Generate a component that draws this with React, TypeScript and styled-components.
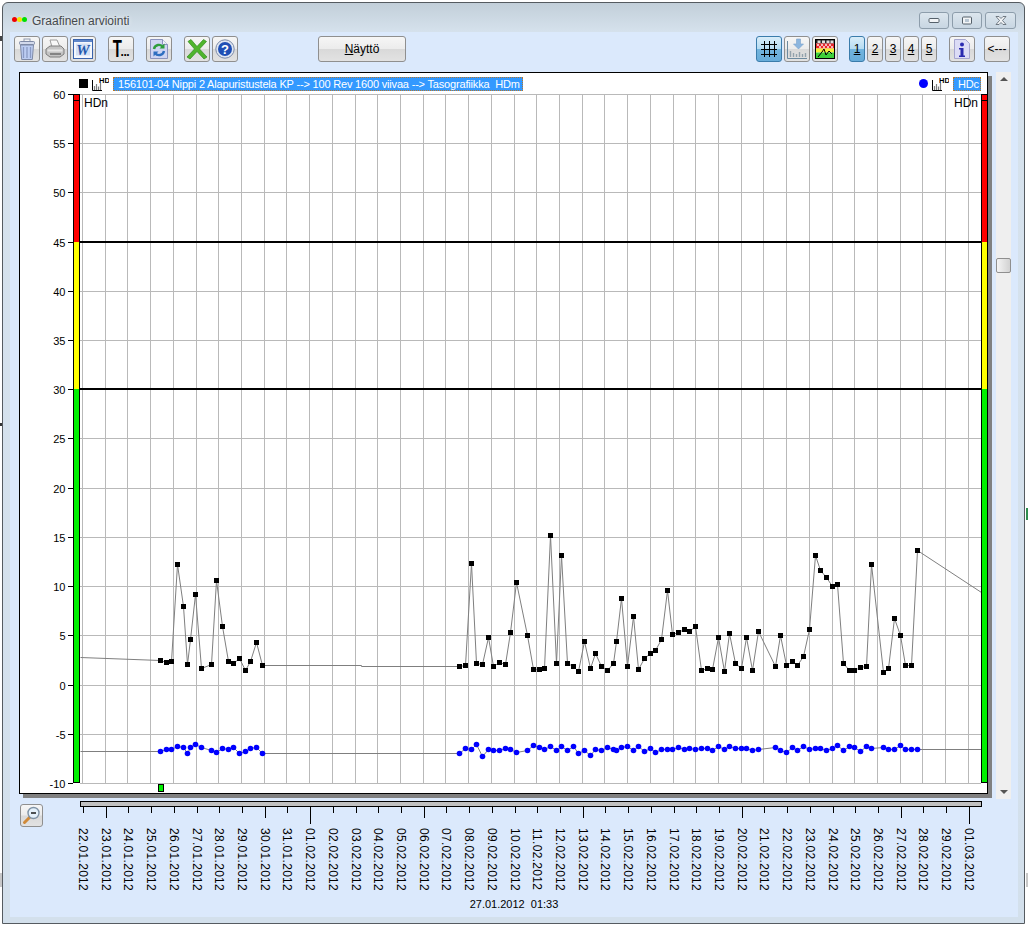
import React from 'react';
import styled, { createGlobalStyle, css } from 'styled-components';

const GlobalStyle = createGlobalStyle`
    html, body {
        margin: 0;
        background: #ffffff;
        font-family: "Liberation Sans", Arial, sans-serif;
        font-size: 12px;
        color: #000000;
    }
`;

type Pt = [number, number];

// pixel positions read off the reference, the chart is drawn in page coordinates
const blackSeries: Pt[] = [
    [80, 657], [160, 660], [166, 662], [171, 661], [177, 564], [183, 606], [187, 664], [190, 639], [195, 594],
    [201, 668], [211, 664], [216, 580], [222, 626], [228, 661], [233, 663], [239, 658], [245, 670], [250, 661],
    [256, 642], [262, 665], [361, 665], [361, 666], [459, 666], [465, 665], [471, 563], [476, 663], [482, 664],
    [488, 637], [493, 666], [499, 662], [505, 664], [510, 632], [516, 582], [527, 635], [533, 669], [539, 669],
    [544, 668], [550, 535], [556, 663], [561, 555], [567, 663], [573, 666], [578, 671], [584, 641], [590, 668],
    [595, 653], [601, 666], [607, 670], [613, 663], [616, 641], [621, 598], [627, 666], [633, 616], [638, 669],
    [644, 658], [650, 653], [655, 650], [661, 639], [667, 590], [672, 634], [678, 632], [684, 629], [689, 631],
    [695, 626], [701, 670], [707, 668], [712, 669], [718, 637], [724, 671], [729, 633], [735, 663], [741, 668],
    [746, 637], [752, 670], [758, 631], [775, 666], [780, 635], [786, 665], [792, 661], [797, 665], [803, 656],
    [809, 629], [815, 555], [820, 570], [826, 577], [832, 586], [837, 584], [843, 663], [849, 670], [854, 670],
    [860, 667], [866, 666], [871, 564], [883, 672], [888, 668], [894, 618], [900, 635], [905, 665], [911, 665],
    [917, 550], [981, 592],
];

const blueSeries: Pt[] = [
    [80, 751], [160, 751], [166, 749], [171, 749], [177, 746], [183, 747], [187, 753], [190, 747], [195, 744],
    [201, 747], [211, 750], [216, 752], [222, 748], [228, 749], [233, 747], [239, 753], [245, 751], [250, 748],
    [256, 747], [262, 753], [459, 753], [465, 748], [471, 749], [476, 744], [482, 756], [488, 749], [493, 750],
    [499, 750], [505, 748], [510, 749], [516, 752], [527, 750], [533, 745], [539, 747], [544, 749], [550, 746],
    [556, 750], [561, 746], [567, 750], [573, 746], [578, 753], [584, 750], [590, 755], [595, 749], [601, 750],
    [607, 747], [613, 749], [616, 750], [621, 747], [627, 746], [633, 750], [638, 746], [644, 751], [650, 748],
    [655, 752], [661, 749], [667, 749], [672, 749], [678, 747], [684, 749], [689, 748], [695, 749], [701, 748],
    [707, 748], [712, 750], [718, 746], [724, 749], [729, 746], [735, 748], [741, 748], [746, 748], [752, 750],
    [758, 749], [775, 747], [780, 750], [786, 752], [792, 747], [797, 750], [803, 746], [809, 749], [815, 748],
    [820, 748], [826, 750], [832, 748], [837, 745], [843, 750], [849, 746], [854, 747], [860, 751], [866, 746],
    [871, 748], [883, 747], [888, 749], [894, 749], [900, 745], [905, 749], [911, 749], [917, 749], [981, 749],
];

const isMarker = ([x]: Pt) => x !== 80 && x !== 361 && x !== 981;
const toLine = (pts: Pt[]) => pts.map(([x, y]) => `${x + 0.5},${y + 0.5}`).join(' ');

const yValues = Array.from({ length: 15 }, (_, i) => 60 - i * 5);
const yPos = (v: number) => Math.round(94 + (60 - v) * 9.842);
const gridX = Array.from({ length: 40 }, (_, i) => Math.floor(82.55 + 22.712 * i));

const dates: { label: string; tick: number }[] = (() => {
    const out: { label: string; tick: number }[] = [];
    const pad = (n: number) => String(n).padStart(2, '0');
    for (let i = 0; i < 40; i++) {
        const d = new Date(2012, 0, 22 + i);
        const day = d.getDate();
        const weekly = (i - 1) % 7 === 0;
        out.push({
            label: `${pad(day)}.${pad(d.getMonth() + 1)}.2012`,
            tick: day === 1 ? 17 : weekly ? 11 : 6,
        });
    }
    return out;
})();

const TrashIcon = () => (
    <svg width="20" height="23" viewBox="0 0 20 23">
        <rect x="7" y="1" width="6" height="3" fill="none" stroke="#8f9ab0" />
        <rect x="2.5" y="3.5" width="15" height="3" rx="1" fill="#d3daec" stroke="#7f8aa6" />
        <path d="M3.5 7h13l-1.2 14.5H4.7z" fill="#bccdf2" stroke="#7f8aa6" />
        <path d="M6.5 9v11M10 9v11M13.5 9v11" stroke="#8a9ac4" strokeWidth="1.3" />
    </svg>
);

const PrinterIcon = () => (
    <svg width="22" height="22" viewBox="0 0 22 22">
        <path d="M6 2h7l3 7H8z" fill="#f8f8f8" stroke="#9c9c9c" />
        <path d="M2 11l4-3h11l3 3v5l-4 3H6l-4-3z" fill="#c4c4c4" stroke="#7e7e7e" />
        <path d="M3.5 11.5h15v2h-15z" fill="#e6e6e6" />
        <path d="M6 16h11" stroke="#6e6e6e" strokeWidth="1.5" />
    </svg>
);

const WordIcon = () => (
    <svg width="20" height="20" viewBox="0 0 20 20">
        <rect x="0.5" y="0.5" width="19" height="19" fill="#f4f7fd" stroke="#3a63ac" />
        <rect x="1" y="1" width="18" height="2" fill="#5f86c9" />
        <rect x="3" y="4.5" width="14" height="12" fill="#d3e0f5" />
        <text x="10" y="15.5" textAnchor="middle" fontFamily="Liberation Serif" fontStyle="italic" fontWeight="700" fontSize="15" fill="#2458ad">W</text>
    </svg>
);

const RefreshIcon = () => (
    <svg width="20" height="22" viewBox="0 0 20 22">
        <path d="M1.5 1.5h12l5 5v14h-17z" fill="#cfd5f2" stroke="#8b93bd" />
        <path d="M13.5 1.5v5h5" fill="#eef0fb" stroke="#8b93bd" />
        <path d="M5 11a5 5 0 0 1 9-2" fill="none" stroke="#2e9d3c" strokeWidth="2.4" />
        <path d="M15.5 5.5v5h-5z" fill="#2e9d3c" />
        <path d="M15 13a5 5 0 0 1-9 2" fill="none" stroke="#2f6fc0" strokeWidth="2.4" />
        <path d="M4.5 18.5v-5h5z" fill="#2f6fc0" />
    </svg>
);

const CrossIcon = () => (
    <svg width="22" height="22" viewBox="0 0 22 22">
        <path d="M2 3.5 L5 1.5 L11 8.5 L17.5 1.5 L20.5 3.5 L13.5 11 L21 19 L18 21 L11 13.5 L4 21 L1 19 L8.5 11z" fill="#4fb52c" stroke="#2f8a1c" strokeWidth="0.7" />
    </svg>
);

const HelpIcon = () => (
    <svg width="20" height="20" viewBox="0 0 20 20">
        <circle cx="10" cy="10" r="9.2" fill="#dfe6f2" stroke="#7b8aa8" />
        <circle cx="10" cy="10" r="7" fill="#1f4fb5" />
        <text x="10" y="14.5" textAnchor="middle" fontFamily="Liberation Sans" fontWeight="700" fontSize="13" fill="#ffffff">?</text>
    </svg>
);

const GridIcon = () => (
    <svg width="18" height="18" viewBox="0 0 18 18">
        <path d="M4.5 1v16M9.5 1v16M14.5 1v16M1 4.5h16M1 9.5h16M1 14.5h16" stroke="#000000" strokeWidth="1" />
    </svg>
);

const ChartDownIcon = () => (
    <svg width="22" height="22" viewBox="0 0 22 22">
        <path d="M1.5 3v17.5H21" fill="none" stroke="#6d8a9f" />
        <path d="M4.5 19v-6M7.5 19v-4M10.5 19v-3M13.5 19v-5M16.5 19v-3M19.5 19v-4" stroke="#93a2ac" strokeWidth="1.4" />
        <path d="M10.5 1h4v5h3l-5 5-5-5h3z" fill="#8db6de" stroke="#7aa3cc" strokeWidth="0.6" />
    </svg>
);

const MapIcon = () => (
    <svg width="20" height="20" viewBox="0 0 20 20">
        <rect x="0.5" y="0.5" width="19" height="19" fill="#ffffff" stroke="#000000" />
        <rect x="1" y="1" width="18" height="3.5" fill="#222222" />
        <path d="M2.5 1.5h3v2.5h-3zM7 1.5h3v2.5H7zM11.5 1.5h3v2.5h-3zM15.5 1.5h3v2.5h-3z" fill="#dddddd" />
        <rect x="1" y="4.5" width="18" height="5" fill="#e8262c" />
        <path d="M2 5h2v2H2zM6 5h2v2H6zM10 5h2v2h-2zM14 5h2v2h-2zM4 7h2v2H4zM8 7h2v2H8zM12 7h2v2h-2zM16 7h2v2h-2z" fill="#f6b8b8" />
        <rect x="1" y="9.5" width="18" height="4" fill="#f5ee3a" />
        <rect x="1" y="13.5" width="18" height="5.5" fill="#3fd13a" />
        <path d="M3 18l4-5 2-3 2 6 3-4 3 3" fill="none" stroke="#000000" strokeWidth="1" />
    </svg>
);

const InfoIcon = () => (
    <svg width="20" height="22" viewBox="0 0 20 22">
        <path d="M2.5 1.5h11l4 4v15h-15z" fill="#dcdcf6" stroke="#a6a6cf" />
        <circle cx="10" cy="6.5" r="2" fill="#2a2ab0" />
        <path d="M7 10h4.5v7.5H13V19H7v-1.5h1.5v-6H7z" fill="#2a2ab0" />
    </svg>
);

const ZoomOutIcon = () => (
    <svg width="19" height="19" viewBox="0 0 19 19">
        <path d="M9 10l-6.5 6.5" stroke="#d08a3a" strokeWidth="3" strokeLinecap="round" />
        <circle cx="11.5" cy="7" r="5.5" fill="#e4f1fb" stroke="#7f93a6" strokeWidth="1.4" />
        <path d="M9 7h5" stroke="#1a1a1a" strokeWidth="1.5" />
    </svg>
);

const HdIcon = () => (
    <svg width="17" height="15" viewBox="0 0 17 15">
        <path d="M0.5 3v10.5H10" fill="none" stroke="#000000" />
        <path d="M2.5 13V9M4.5 13V7M6.5 13V9.5M8.5 13V6" stroke="#7e7e7e" strokeWidth="1.2" />
        <text x="7" y="5.8" fontFamily="Liberation Sans" fontWeight="700" fontSize="7.5" fill="#000000">HD</text>
    </svg>
);

const Backdrop = styled.span<{ $x: number; $y: number; $w: number; $h: number; $color: string }>`
    position: absolute;
    left: ${p => p.$x}px;
    top: ${p => p.$y}px;
    width: ${p => p.$w}px;
    height: ${p => p.$h}px;
    background: ${p => p.$color};
`;

const Window = styled.div`
    box-sizing: border-box;
    width: 1023px;
    height: 922px;
    margin: 2px 0 0 2px;
    display: flex;
    flex-direction: column;
    border: 1px solid #555b60;
    border-radius: 6px 6px 0 0;
    background: linear-gradient(#c2cfd9 0, #d6e2ed 30px, #d3e0ec 100%);
`;

const TitleBar = styled.div`
    height: 29px;
    flex: none;
    display: flex;
    align-items: flex-start;
    padding: 9px 8px 0 9px;
    box-sizing: border-box;
`;

const Lights = styled.div`
    display: flex;
    margin-top: 5px;
`;

const Light = styled.span<{ $color: string }>`
    width: 5px;
    height: 5px;
    border-radius: 50%;
    background: ${p => p.$color};
`;

const Title = styled.div`
    margin: 2px 0 0 5px;
    flex: 1;
    color: #46494c;
    line-height: 14px;
    text-shadow: 0 0 4px #ffffff;
`;

const CaptionButtons = styled.div`
    display: flex;
    gap: 3px;
`;

const CaptionButton = styled.div<{ $wide?: boolean }>`
    box-sizing: border-box;
    width: ${p => (p.$wide ? 31 : 30)}px;
    height: 17px;
    display: flex;
    align-items: center;
    justify-content: center;
    border: 1px solid #8d9dab;
    border-radius: 3px;
    background: linear-gradient(#dce6ee, #c8d6e2);
`;

const Client = styled.div`
    width: 1008px;
    height: 885px;
    margin-left: 7px;
    flex: none;
    display: flex;
    flex-direction: column;
    background: #dbe9fc;
`;

const Toolbar = styled.div`
    display: flex;
    padding: 4px 0 0 4px;
    height: 26px;
    flex: none;
`;

const activeLook = css`
    border-color: #3a7cab;
    background: linear-gradient(#d9edf9 0, #b6dcf2 48%, #72b4de 52%, #67acd9 100%);
`;

const ToolButton = styled.div<{ $at?: number; $w?: number; $active?: boolean }>`
    box-sizing: border-box;
    width: ${p => p.$w ?? 26}px;
    height: 26px;
    margin-left: ${p => p.$at ?? 2}px;
    flex: none;
    display: flex;
    align-items: center;
    justify-content: center;
    border: 1px solid #8f8f8f;
    border-radius: 3px;
    background: linear-gradient(#f6f6f6 0, #ececec 48%, #d9d9d9 52%, #e2e2e2 100%);
    font-size: 12px;
    ${p => p.$active && activeLook}
`;

const TextGlyph = styled.span`
    font-size: 24px;
    line-height: 24px;
    font-weight: 700;
    transform: scaleX(0.62);
    margin: 0 -4px 0 -3px;
`;

const Dots = styled.span`
    align-self: flex-end;
    margin-bottom: 3px;
    font-size: 12px;
    line-height: 12px;
    font-weight: 700;
    letter-spacing: -0.5px;
`;

const Body = styled.div`
    display: flex;
    align-items: flex-start;
    padding: 10px 0 0 9px;
    gap: 8px;
    flex: none;
`;

const Panel = styled.div`
    box-sizing: border-box;
    width: 969px;
    height: 722px;
    flex: none;
    border: 1px solid #000000;
    background: #ffffff;
    box-shadow: 4px 4px 0 #808080;
`;

const Legend = styled.div`
    height: 21px;
    display: flex;
    align-items: flex-start;
    justify-content: space-between;
    padding: 4px 6px 0 59px;
    box-sizing: border-box;
`;

const LegendGroup = styled.div`
    display: flex;
    align-items: flex-start;
    gap: 4px;
`;

const SeriesSwatch = styled.span<{ $round?: boolean; $color: string }>`
    width: 9px;
    height: 9px;
    margin-top: 2px;
    background: ${p => p.$color};
    border-radius: ${p => (p.$round ? '50%' : '0')};
`;

const SeriesName = styled.span<{ $w: number }>`
    box-sizing: border-box;
    width: ${p => p.$w}px;
    height: 14px;
    line-height: 12px;
    padding-left: 4px;
    background: #3399ff;
    color: #ffffff;
    border: 1px dotted #b8772a;
    white-space: pre;
    font-size: 11px;
    letter-spacing: -0.18px;
`;

const PlotSvg = styled.svg`
    display: block;
    overflow: visible;
`;

const ScrollBar = styled.div`
    width: 15px;
    height: 727px;
    flex: none;
    background: #efefef;
    display: flex;
    flex-direction: column;
    align-items: center;
    justify-content: space-between;
    position: relative;
    padding: 5px 0;
    box-sizing: border-box;
`;

const Thumb = styled.div`
    position: absolute;
    top: 186px;
    left: 0;
    width: 15px;
    height: 15px;
    box-sizing: border-box;
    border: 1px solid #8f8f8f;
    border-radius: 2px;
    background: linear-gradient(90deg, #f4f4f4, #d2d2d2);
`;

const Arrow = styled.span<{ $up?: boolean }>`
    width: 0;
    height: 0;
    border-left: 4px solid transparent;
    border-right: 4px solid transparent;
    ${p =>
        p.$up
            ? 'border-bottom: 4px solid #555555;'
            : 'border-top: 4px solid #555555;'}
`;

const AxisRow = styled.div`
    display: flex;
    align-items: flex-start;
    padding-left: 10px;
    margin-top: 1px;
    height: 96px;
    flex: none;
`;

const ZoomButton = styled(ToolButton)`
    width: 23px;
    height: 23px;
    margin: 4px 1px 0 0;
`;

const Status = styled.div`
    text-align: center;
    white-space: pre;
    line-height: 14px;
    font-size: 11px;
    padding-top: 1px;
`;

export default function App() {
    return (
        <>
            <GlobalStyle />
            <Backdrop $x={0} $y={36} $w={2} $h={5} $color="#444444" />
            <Backdrop $x={0} $y={423} $w={2} $h={3} $color="#333333" />
            <Backdrop $x={0} $y={873} $w={2} $h={14} $color="#c8c8c8" />
            <Backdrop $x={1026} $y={508} $w={2} $h={12} $color="#2f8f4f" />
            <Backdrop $x={1026} $y={873} $w={2} $h={14} $color="#c8c8c8" />
            <Window>
                <TitleBar>
                    <Lights>
                        <Light $color="#f00000" />
                        <Light $color="#f2e600" />
                        <Light $color="#00e000" />
                    </Lights>
                    <Title>Graafinen arviointi</Title>
                    <CaptionButtons>
                        <CaptionButton>
                            <svg width="12" height="7"><rect x="1" y="1.5" width="10" height="4" rx="1" fill="#f2f4f6" stroke="#55606a" /></svg>
                        </CaptionButton>
                        <CaptionButton>
                            <svg width="12" height="9"><rect x="1.5" y="1" width="9" height="7" rx="1" fill="#f2f4f6" stroke="#55606a" /><rect x="4" y="3" width="4" height="3" fill="#b8c6d2" /></svg>
                        </CaptionButton>
                        <CaptionButton $wide>
                            <svg width="14" height="11"><path d="M2 1.5h3l2 2 2-2h3l-3.5 4 3.5 4H9l-2-2-2 2H2l3.5-4z" fill="#f2f4f6" stroke="#55606a" strokeWidth="0.8" /></svg>
                        </CaptionButton>
                    </CaptionButtons>
                </TitleBar>
                <Client>
                    <Toolbar>
                        <ToolButton $at={0}><TrashIcon /></ToolButton>
                        <ToolButton><PrinterIcon /></ToolButton>
                        <ToolButton><WordIcon /></ToolButton>
                        <ToolButton $at={12}><TextGlyph>T</TextGlyph><Dots>...</Dots></ToolButton>
                        <ToolButton $at={12}><RefreshIcon /></ToolButton>
                        <ToolButton $at={12}><CrossIcon /></ToolButton>
                        <ToolButton><HelpIcon /></ToolButton>
                        <ToolButton $at={80} $w={88}><span><u>N</u>äyttö</span></ToolButton>
                        <ToolButton $at={350} $active><GridIcon /></ToolButton>
                        <ToolButton><ChartDownIcon /></ToolButton>
                        <ToolButton><MapIcon /></ToolButton>
                        <ToolButton $at={11} $w={16} $active><u>1</u></ToolButton>
                        <ToolButton $w={16}><u>2</u></ToolButton>
                        <ToolButton $w={16}><u>3</u></ToolButton>
                        <ToolButton $w={16}><u>4</u></ToolButton>
                        <ToolButton $w={16}><u>5</u></ToolButton>
                        <ToolButton $at={12}><InfoIcon /></ToolButton>
                        <ToolButton $at={9}>&lt;---</ToolButton>
                    </Toolbar>
                    <Body>
                        <Panel>
                            <Legend>
                                <LegendGroup>
                                    <SeriesSwatch $color="#000000" />
                                    <HdIcon />
                                    <SeriesName $w={410}>156101-04 Nippi 2 Alapuristustela KP --&gt; 100 Rev 1600 viivaa --&gt; Tasografiikka  HDm</SeriesName>
                                </LegendGroup>
                                <LegendGroup>
                                    <SeriesSwatch $round $color="#0000ff" />
                                    <HdIcon />
                                    <SeriesName $w={28}>HDc</SeriesName>
                                </LegendGroup>
                            </Legend>
                            <PlotSvg width="967" height="699" viewBox="20 94 967 699" fontFamily="Liberation Sans" fontSize="12">
                                {yValues.map(v => (
                                    <path key={v} d={`M80 ${yPos(v) + 0.5}H981`} stroke="#b9b9b9" />
                                ))}
                                {gridX.map(x => (
                                    <path key={x} d={`M${x + 0.5} 94V783`} stroke="#b9b9b9" />
                                ))}
                                <rect x="80" y="241" width="901" height="2" fill="#000000" />
                                <rect x="80" y="388" width="901" height="2" fill="#000000" />

                                <polyline points={toLine(blackSeries)} fill="none" stroke="#7f7f7f" />
                                <polyline points={toLine(blueSeries)} fill="none" stroke="#7f7f7f" />
                                {blackSeries.filter(isMarker).map(([x, y]) => (
                                    <rect key={x} x={x - 2} y={y - 2} width="5" height="5" fill="#000000" />
                                ))}
                                {blueSeries.filter(isMarker).map(([x, y]) => (
                                    <circle key={x} cx={x + 0.5} cy={y + 0.5} r="2.8" fill="#0000ff" />
                                ))}

                                {[73, 981].map(x => (
                                    <g key={x}>
                                        <rect x={x} y="94" width="7" height="148" fill="#ff0000" />
                                        <rect x={x} y="242" width="7" height="147" fill="#ffff00" />
                                        <rect x={x} y="389" width="7" height="394" fill="#00f000" />
                                        <rect x={x + 0.5} y="94.5" width="6" height="688" fill="none" stroke="#000000" />
                                        <path d={`M${x} 100.5h7`} stroke="#000000" />
                                    </g>
                                ))}
                                {yValues.map(v => (
                                    <g key={v}>
                                        <path d={`M68 ${yPos(v) + 0.5}h5`} stroke="#000000" />
                                        <text x="65.5" y={yPos(v) + 4.5} textAnchor="end" fontSize="11">{v}</text>
                                    </g>
                                ))}
                                <text x="84" y="107">HDn</text>
                                <text x="954" y="107">HDn</text>
                                <rect x="158.5" y="784.5" width="5" height="7" fill="#00f000" stroke="#000000" />
                            </PlotSvg>
                        </Panel>
                        <ScrollBar>
                            <Arrow $up />
                            <Thumb />
                            <Arrow />
                        </ScrollBar>
                    </Body>
                    <AxisRow>
                        <ZoomButton><ZoomOutIcon /></ZoomButton>
                        <svg width="960" height="96" viewBox="44 800 960 96" fontFamily="Liberation Sans" fontSize="12" letterSpacing="0.3">
                            <rect x="80.5" y="801.5" width="901" height="5" fill="#c0c0c0" stroke="#000000" />
                            {dates.map((d, i) => (
                                <g key={d.label}>
                                    <path d={`M${gridX[i] + 1.5} 807v${d.tick}`} stroke="#000000" />
                                    <text transform={`translate(${gridX[i] - 3.5} 828) rotate(90)`}>{d.label}</text>
                                </g>
                            ))}
                        </svg>
                    </AxisRow>
                    <Status>27.01.2012  01:33</Status>
                </Client>
            </Window>
        </>
    );
}
